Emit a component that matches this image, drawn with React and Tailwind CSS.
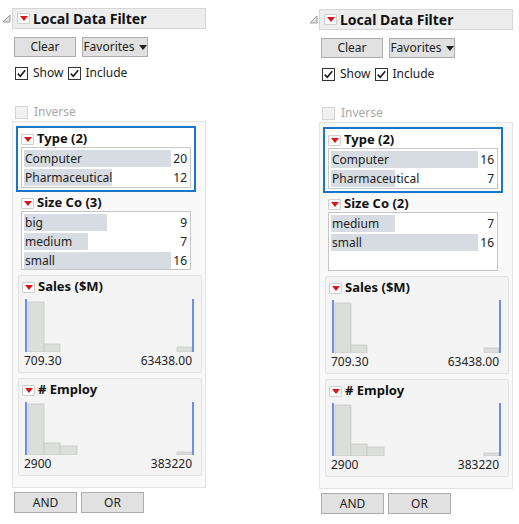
import React from 'react';

const font = { fontFamily: '"Noto Sans", "Open Sans", sans-serif' };

function RedTri() {
  return (
    <span className="inline-flex items-center justify-center w-[13px] h-[11px] border border-[#cfcfcf] bg-[#fdfdfd] rounded-[1px] shrink-0">
      <svg width="8" height="5" viewBox="0 0 8 5">
        <polygon points="0,0 8,0 4,5" fill="#d9141b" />
      </svg>
    </span>
  );
}

function Check({ checked, disabled }) {
  return (
    <span
      className={`w-[13px] h-[13px] border flex items-center justify-center shrink-0 ${
        disabled ? 'border-[#d4d4d4] bg-[#f1f1f1]' : 'border-[#333333] bg-white'
      }`}
    >
      {checked && (
        <svg width="11" height="11" viewBox="0 0 11 11">
          <path d="M1.8 5.6 L4.3 8.2 L9.2 2.2" stroke="#1a1a1a" strokeWidth="1.6" fill="none" />
        </svg>
      )}
    </span>
  );
}

function BarList({ rows, max, tall }) {
  return (
    <div className={`bg-white border border-[#c6c6c6] px-[2px] pt-[1px] ${tall ? 'h-[59px]' : ''}`}>
      {rows.map((r) => (
        <div key={r.label} className="flex items-center h-[19px]">
          <div className="w-[147px] relative h-[17px]">
            <div className="absolute left-0 top-0 bottom-0 bg-[#d6dce2]" style={{ width: `${(r.n / max) * 100}%` }} />
            <span className="relative pl-[1px] leading-[17px]">{r.label}</span>
          </div>
          <span className="flex-1 text-right pr-[1px]">{r.n}</span>
        </div>
      ))}
    </div>
  );
}

function Hist({ bars, right, lo, hi, title }) {
  return (
    <div className="bg-[#f4f4f4] border border-[#e2e2e2] rounded-[2px] pl-[3px] pr-[8px] pt-[4px] pb-[4px]">
      <div className="flex items-center gap-[3px] h-[14px]">
        <RedTri />
        <span className="font-bold text-[13px] text-[#111]">{title}</span>
      </div>
      <svg width="172" height="54" viewBox="0 0 172 54" className="mt-[4px] ml-[2px] block">
        <rect x="1" y="1" width="2" height="53" fill="#6e8fe6" />
        {bars.map((b, i) => (
          <rect key={i} x={b[0]} y={b[1]} width={b[2]} height={54 - b[1]} fill="#dcdedb" stroke="#c6c8c5" strokeWidth="0.8" />
        ))}
        <rect x="153" y={right} width="15" height={54 - right} fill="#dcdedb" stroke="#c6c8c5" strokeWidth="0.8" />
        <rect x="168" y="1" width="2" height="53" fill="#6e8fe6" />
      </svg>
      <div className="flex justify-between mt-[2px] text-[12px] leading-[14px] text-[#222] pl-[2px] pr-[1px]">
        <span>{lo}</span>
        <span>{hi}</span>
      </div>
    </div>
  );
}

function Filter({ type, sizes, sizeCount, sizeMax }) {
  return (
    <div className="w-[206px] text-[12px] text-[#222]">
      <div className="flex items-center">
        <svg width="9" height="9" viewBox="0 0 9 9" className="ml-[2px] mr-[1px] shrink-0">
          <polygon points="8,1 8,8 1,8" fill="#e2e2e2" stroke="#9a9a9a" strokeWidth="1" />
        </svg>
        <div className="flex-1 h-[21px] bg-[#ededed] border border-[#d6d6d6] flex items-center gap-[3px] pl-[4px]">
          <RedTri />
          <span className="font-bold text-[14px] text-[#111] leading-none">Local Data Filter</span>
        </div>
      </div>

      <div className="pl-[14px] mt-[8px] flex gap-[6px]">
        <button className="w-[62px] h-[20px] bg-[#e1e1e1] border border-[#adadad] text-[12px]">Clear</button>
        <button className="w-[66px] h-[20px] bg-[#e1e1e1] border border-[#adadad] text-[12px] flex items-center justify-center gap-[4px]">
          Favorites
          <svg width="8" height="5" viewBox="0 0 8 5">
            <polygon points="0,0 8,0 4,5" fill="#222" />
          </svg>
        </button>
      </div>

      <div className="pl-[15px] mt-[9px] flex items-center h-[14px]">
        <Check checked />
        <span className="ml-[5px]">Show</span>
        <span className="ml-[5px]">
          <Check checked />
        </span>
        <span className="ml-[4px]">Include</span>
      </div>

      <div className="pl-[15px] mt-[25px] flex items-center h-[14px]">
        <Check disabled />
        <span className="ml-[6px] text-[#a8a8a8]">Inverse</span>
      </div>

      <div className="ml-[12px] mt-[2px] h-[367px] border border-[#e3e3e3] bg-[#f9f9f9] pt-[4px] pl-[3px] pr-[3px]">
        <div className="w-[180px] border-2 border-[#1b74c8] bg-white px-[3px] pt-[3px] pb-[2px]">
          <div className="flex items-center gap-[3px] h-[16px]">
            <RedTri />
            <span className="font-bold text-[13px] text-[#111]">Type (2)</span>
          </div>
          <BarList rows={type} max={type[0].n} />
        </div>
        <div className="w-[180px] px-[5px] pt-[3px] pb-[5px]">
          <div className="flex items-center gap-[3px] h-[16px]">
            <RedTri />
            <span className="font-bold text-[13px] text-[#111]">Size Co ({sizeCount})</span>
          </div>
          <BarList rows={sizes} max={sizeMax} tall />
        </div>
        <div className="ml-[2px] flex flex-col gap-[5px]">
          <Hist
            title="Sales ($M)"
            bars={[[4, 4, 16], [20, 46, 16]]}
            right={49}
            lo="709.30"
            hi="63438.00"
          />
          <Hist
            title="# Employ"
            bars={[[4, 3, 16], [20, 42, 16], [36, 45, 17]]}
            right={51}
            lo="2900"
            hi="383220"
          />
        </div>
      </div>

      <div className="pl-[14px] mt-[4px] flex gap-[4px]">
        <button className="w-[63px] h-[21px] bg-[#e1e1e1] border border-[#adadad] text-[12px]">AND</button>
        <button className="w-[63px] h-[21px] bg-[#e1e1e1] border border-[#adadad] text-[12px]">OR</button>
      </div>
    </div>
  );
}

export default function App() {
  return (
    <div className="w-[519px] h-[524px] bg-white flex pt-[8px]" style={font}>
      <div className="w-[307px]">
        <Filter
          type={[{ label: 'Computer', n: 20 }, { label: 'Pharmaceutical', n: 12 }]}
          sizes={[{ label: 'big', n: 9 }, { label: 'medium', n: 7 }, { label: 'small', n: 16 }]}
          sizeCount={3}
          sizeMax={16}
        />
      </div>
      <div className="pt-[1px]">
        <Filter
          type={[{ label: 'Computer', n: 16 }, { label: 'Pharmaceutical', n: 7 }]}
          sizes={[{ label: 'medium', n: 7 }, { label: 'small', n: 16 }]}
          sizeCount={2}
          sizeMax={16}
        />
      </div>
    </div>
  );
}
